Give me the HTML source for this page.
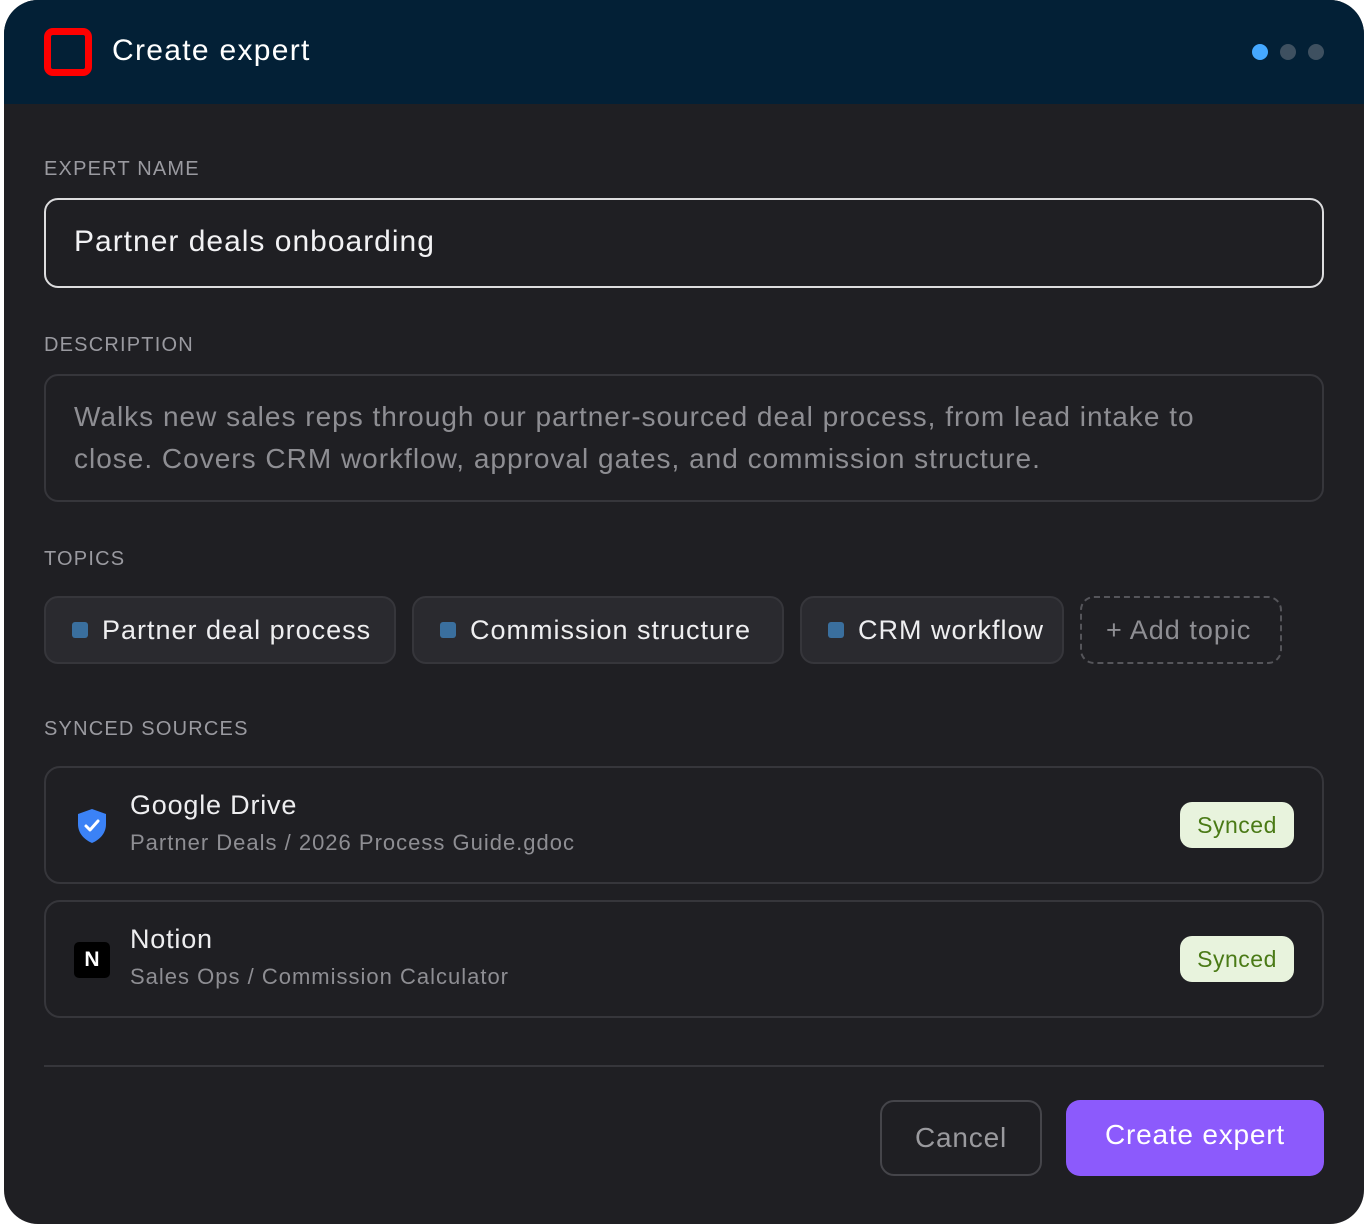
<!DOCTYPE html>
<html><head><style>
*{box-sizing:border-box;margin:0;padding:0}
body{width:1368px;height:1232px;background:#fff;font-family:"Liberation Sans",sans-serif;position:relative;overflow:hidden;letter-spacing:0.8px}
.card{position:absolute;left:4px;top:0;width:1360px;height:1224px;background:#1f1f23;border-radius:34px;overflow:hidden}
.hdr{position:absolute;left:0;top:0;width:1360px;height:104px;background:#032036}
.abs{position:absolute}
.lbl{position:absolute;left:40px;font-size:20px;letter-spacing:1.2px;color:#9a9aa0}
.chip{position:absolute;top:596px;height:68px;background:#2a2a2f;border:2px solid #36363b;border-radius:14px;color:#eeeef0;font-size:27px;line-height:64px;padding-left:56px;letter-spacing:1px}
.chip i{position:absolute;left:26px;top:24px;width:16px;height:16px;background:#3a6f9e;border-radius:3px}
.src{position:absolute;left:40px;width:1280px;height:118px;border:2px solid #36363b;border-radius:16px}
.src .t{position:absolute;left:84px;top:22px;font-size:27px;color:#eeeef0}
.src .s{position:absolute;left:84px;top:62px;font-size:22px;color:#8e8e93;letter-spacing:1px}
.badge{position:absolute;left:1134px;top:34px;width:114px;height:46px;background:#e8f3dd;border-radius:12px;color:#4a7a16;font-size:23px;text-align:center;line-height:46px;letter-spacing:0.5px}
</style></head><body>
<div class="card">
 <div class="hdr">
  <div class="abs" style="left:40px;top:28px;width:48px;height:48px;background:#ff0000;border-radius:9px"></div>
  <div class="abs" style="left:47px;top:35px;width:34px;height:34px;background:#032036;border-radius:2px"></div>
  <div class="abs" style="left:108px;top:34px;font-size:30px;color:#fff;letter-spacing:1.3px">Create expert</div>
  <div class="abs" style="left:1248px;top:44px;width:16px;height:16px;border-radius:50%;background:#45a8ff"></div>
  <div class="abs" style="left:1276px;top:44px;width:16px;height:16px;border-radius:50%;background:#3e5060"></div>
  <div class="abs" style="left:1304px;top:44px;width:16px;height:16px;border-radius:50%;background:#3e5060"></div>
 </div>
 <div class="lbl" style="top:158px">EXPERT NAME</div>
 <div class="abs" style="left:40px;top:198px;width:1280px;height:90px;border:2px solid #dcdcde;border-radius:14px;color:#f2f2f4;font-size:30px;padding:25px 0 0 28px;letter-spacing:1px">Partner deals onboarding</div>
 <div class="lbl" style="top:334px">DESCRIPTION</div>
 <div class="abs" style="left:40px;top:374px;width:1280px;height:128px;border:2px solid #36363b;border-radius:14px;color:#8e8e93;font-size:28px;line-height:42px;padding:20px 40px 0 28px;letter-spacing:1px">Walks new sales reps through our partner-sourced deal process, from lead intake to close. Covers CRM workflow, approval gates, and commission structure.</div>
 <div class="lbl" style="top:548px">TOPICS</div>
 <div class="chip" style="left:40px;width:352px"><i></i>Partner deal process</div>
 <div class="chip" style="left:408px;width:372px"><i></i>Commission structure</div>
 <div class="chip" style="left:796px;width:264px"><i></i>CRM workflow</div>
 <div class="chip" style="left:1076px;width:202px;background:none;border:2px dashed #55555a;color:#8e8e93;padding-left:24px">+ Add topic</div>
 <div class="lbl" style="top:718px">SYNCED SOURCES</div>
 <div class="src" style="top:766px">
  <svg class="abs" style="left:30px;top:40px" width="32" height="36" viewBox="0 0 32 36"><path d="M16 1 L30 6 V16 C30 26 23 32 16 35 C9 32 2 26 2 16 V6 Z" fill="#3b82f6"/><path d="M10 18 L14 22 L22 13" stroke="#fff" stroke-width="3" fill="none" stroke-linecap="round" stroke-linejoin="round"/></svg>
  <div class="t">Google Drive</div><div class="s">Partner Deals / 2026 Process Guide.gdoc</div>
  <div class="badge">Synced</div>
 </div>
 <div class="src" style="top:900px">
  <div class="abs" style="left:28px;top:40px;width:36px;height:36px;background:#000;border-radius:5px;color:#fff;font-weight:bold;font-size:21px;text-align:center;line-height:36px;letter-spacing:0">N</div>
  <div class="t">Notion</div><div class="s">Sales Ops / Commission Calculator</div>
  <div class="badge">Synced</div>
 </div>
 <div class="abs" style="left:40px;top:1065px;width:1280px;height:2px;background:#36363b"></div>
 <div class="abs" style="left:876px;top:1100px;width:162px;height:76px;border:2px solid #45454a;border-radius:14px;color:#9a9a9e;font-size:28px;text-align:center;line-height:72px">Cancel</div>
 <div class="abs" style="left:1062px;top:1100px;width:258px;height:76px;background:#8c5afc;border-radius:14px;color:#fff;font-size:28px;text-align:center;line-height:70px">Create expert</div>
</div>
</body></html>
